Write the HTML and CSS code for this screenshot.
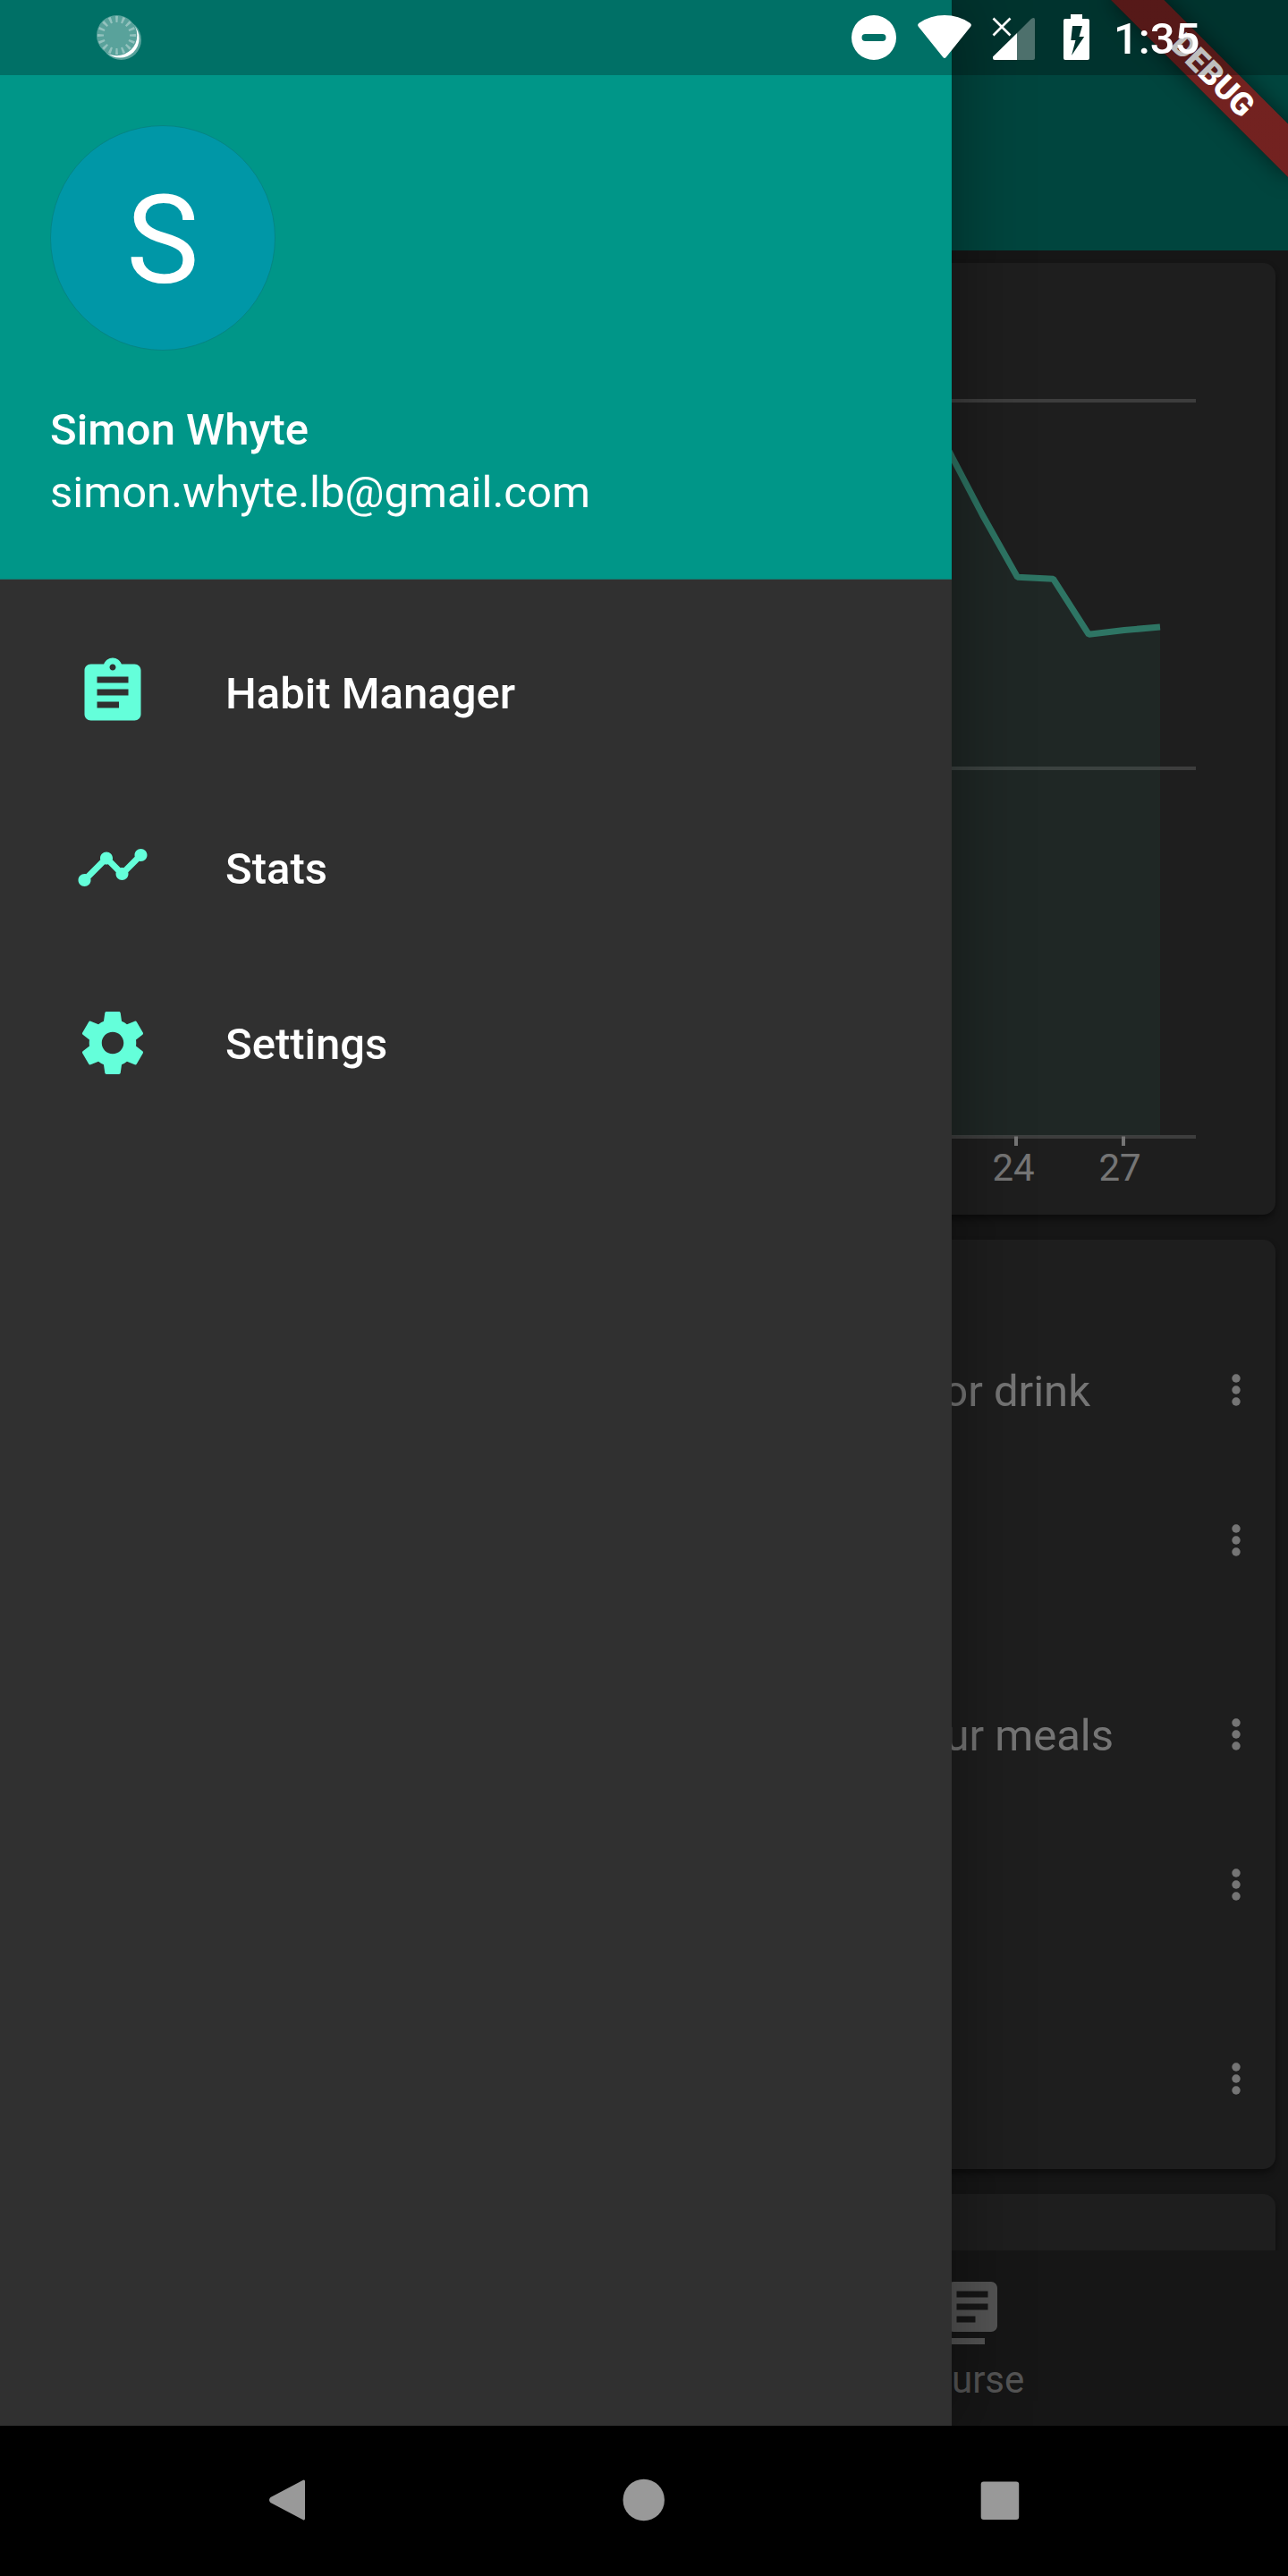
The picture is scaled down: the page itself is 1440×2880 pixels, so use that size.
FILE: index.html
```html
<!DOCTYPE html>
<html lang="en">
<head>
<meta charset="utf-8">
<title>Habits</title>
<link rel="stylesheet" href="styles.css">
</head>
<body>
<div class="screen">
  <div class="app">
    <header class="app-bar"></header>
    <main class="content">
      <section class="card chart-card">
        <svg class="chart" viewBox="14 294 1412 1064">
          <g class="grid">
            <path d="M100 448H1337M100 859H1337M100 1271H1337"/>
          </g>
          <path class="area" d="M1020 427L1064 510L1098 575L1137 645L1178 647L1217.5 709.5L1257 705L1297 701V1269.5H1020Z"/>
          <path class="line" d="M1020 427L1064 510L1098 575L1137.5 645.2L1177.5 647.2L1217.3 709.3L1257 704.5L1297 701"/>
          <path class="tick" d="M1136 1270.5V1281M1256 1270.5V1281"/>
          <text class="label" x="1133" y="1320">24</text>
          <text class="label" x="1252" y="1320">27</text>
        </svg>
      </section>
      <section class="card habits">
        <div class="group">
          <div class="habit"><span class="habit-name name-drink">or drink</span><svg class="more" viewBox="0 0 10 36"><circle cx="5" cy="5" r="4.7"/><circle cx="5" cy="18" r="4.7"/><circle cx="5" cy="31" r="4.7"/></svg></div>
          <div class="habit"><svg class="more" viewBox="0 0 10 36"><circle cx="5" cy="5" r="4.7"/><circle cx="5" cy="18" r="4.7"/><circle cx="5" cy="31" r="4.7"/></svg></div>
        </div>
        <div class="group">
          <div class="habit"><span class="habit-name name-meals">ur meals</span><svg class="more" viewBox="0 0 10 36"><circle cx="5" cy="5" r="4.7"/><circle cx="5" cy="18" r="4.7"/><circle cx="5" cy="31" r="4.7"/></svg></div>
          <div class="habit"><svg class="more" viewBox="0 0 10 36"><circle cx="5" cy="5" r="4.7"/><circle cx="5" cy="18" r="4.7"/><circle cx="5" cy="31" r="4.7"/></svg></div>
        </div>
        <div class="group">
          <div class="habit"><svg class="more" viewBox="0 0 10 36"><circle cx="5" cy="5" r="4.7"/><circle cx="5" cy="18" r="4.7"/><circle cx="5" cy="31" r="4.7"/></svg></div>
        </div>
      </section>
      <section class="card next-card"></section>
    </main>
    <nav class="tabs">
      <div class="tab"></div>
      <div class="tab">
        <svg class="icon" viewBox="0 0 24 24"><path d="M4 6H2v14c0 1.1.9 2 2 2h14v-2H4V6zm16-4H8c-1.1 0-2 .9-2 2v12c0 1.1.9 2 2 2h12c1.1 0 2-.9 2-2V4c0-1.1-.9-2-2-2zm-1 9H9V9h10v2zm-4 4H9v-2h6v2zm4-8H9V5h10v2z"/></svg>
        <span class="tab-label">Course</span>
      </div>
    </nav>
    <div class="scrim"></div>
    <aside class="drawer">
      <div class="account">
        <div class="avatar">S</div>
        <div class="account-name">Simon Whyte</div>
        <div class="account-email">simon.whyte.lb@gmail.com</div>
      </div>
      <ul class="menu">
        <li class="menu-item">
          <svg class="icon" viewBox="0 0 24 24"><path d="M19 3h-4.18C14.4 1.84 13.3 1 12 1c-1.3 0-2.4.84-2.82 2H5c-1.1 0-2 .9-2 2v14c0 1.1.9 2 2 2h14c1.1 0 2-.9 2-2V5c0-1.1-.9-2-2-2zm-7 0c.55 0 1 .45 1 1s-.45 1-1 1-1-.45-1-1 .45-1 1-1zm2 14H7v-2h7v2zm3-4H7v-2h10v2zm0-4H7V7h10v2z"/></svg>
          <span class="menu-label">Habit Manager</span>
        </li>
        <li class="menu-item">
          <svg class="icon" viewBox="0 0 24 24"><path d="M23 8c0 1.1-.9 2-2 2-.18 0-.35-.02-.51-.07l-3.56 3.55c.05.16.07.34.07.52 0 1.1-.9 2-2 2s-2-.9-2-2c0-.18.02-.36.07-.52l-2.55-2.55c-.16.05-.34.07-.52.07s-.36-.02-.52-.07l-4.55 4.56c.05.16.07.33.07.51 0 1.1-.9 2-2 2s-2-.9-2-2 .9-2 2-2c.18 0 .35.02.51.07l4.56-4.55C8.02 9.36 8 9.18 8 9c0-1.1.9-2 2-2s2 .9 2 2c0 .18-.02.36-.07.52l2.55 2.55c.16-.05.34-.07.52-.07s.36.02.52.07l3.55-3.56C19.02 8.35 19 8.18 19 8c0-1.1.9-2 2-2s2 .9 2 2z"/></svg>
          <span class="menu-label">Stats</span>
        </li>
        <li class="menu-item">
          <svg class="icon" viewBox="0 0 24 24"><path d="M19.43 12.98c.04-.32.07-.64.07-.98s-.03-.66-.07-.98l2.11-1.65c.19-.15.24-.42.12-.64l-2-3.46c-.12-.22-.39-.3-.61-.22l-2.49 1c-.52-.4-1.08-.73-1.69-.98l-.38-2.65C14.46 2.18 14.25 2 14 2h-4c-.25 0-.46.18-.49.42l-.38 2.65c-.61.25-1.17.59-1.69.98l-2.49-1c-.23-.09-.49 0-.61.22l-2 3.46c-.13.22-.07.49.12.64l2.11 1.65c-.04.32-.07.65-.07.98s.03.66.07.98l-2.11 1.65c-.19.15-.24.42-.12.64l2 3.46c.12.22.39.3.61.22l2.49-1c.52.4 1.08.73 1.69.98l.38 2.65c.03.24.24.42.49.42h4c.25 0 .46-.18.49-.42l.38-2.65c.61-.25 1.17-.59 1.69-.98l2.49 1c.23.09.49 0 .61-.22l2-3.46c.12-.22.07-.49-.12-.64l-2.11-1.65zM12 15.5c-1.93 0-3.5-1.57-3.5-3.5s1.57-3.5 3.5-3.5 3.5 1.57 3.5 3.5-1.57 3.5-3.5 3.5z"/></svg>
          <span class="menu-label">Settings</span>
        </li>
      </ul>
    </aside>
    <div class="debug-banner">DEBUG</div>
    <div class="status-bar">
      <svg class="sync" viewBox="107 16 52 52">
        <defs><mask id="crescent"><rect x="100" y="10" width="70" height="70" fill="#fff"/><circle cx="130.5" cy="39.5" r="22.8" fill="#000"/></mask></defs>
        <g opacity=".35" fill="#fff"><circle cx="130.5" cy="39.5" r="22.5"/><circle cx="135.5" cy="44.5" r="22.5"/></g>
        <circle cx="134" cy="43" r="21.6" fill="#fff" mask="url(#crescent)"/>
        <circle cx="130.5" cy="39.5" r="18" pathLength="160" class="sync-ticks"/>
      </svg>
      <div class="status-icons">
        <svg width="52" height="84" viewBox="951 0 52 84"><path fill="#fff" fill-rule="evenodd" d="M977 17a25 25 0 1 0 0 50a25 25 0 1 0 0-50ZM967.5 38h19a4 4 0 0 1 0 8h-19a4 4 0 0 1 0-8Z"/></svg>
        <svg width="62" height="84" viewBox="1025 0 62 84"><path fill="#fff" d="M1026.800 29.800Q1025.200 27.500 1027.500 25.800Q1040 17 1056 17T1084.500 25.800Q1086.800 27.500 1085.200 29.800L1058.500 63Q1056 67 1053.500 63Z"/></svg>
        <svg width="50" height="84" viewBox="1109 0 50 84"><path fill="#fff" d="M1137 37V67H1112Q1110 67 1110 65V63.500Z"/><path fill="#fff" opacity=".3" d="M1137 37L1153 21Q1157 18.500 1157 22V65Q1157 67 1155 67H1137Z"/><path stroke="#fff" stroke-width="2.600" d="M1110.500 20.500L1129.500 39.500M1129.500 20.500L1110.500 39.500"/></svg>
        <svg width="31" height="84" viewBox="1188 0 31 84"><path fill="#fff" fill-rule="evenodd" d="M1197 16H1210V21H1216Q1218 21 1218 23V65Q1218 67 1216 67H1191Q1189 67 1189 65V23Q1189 21 1191 21H1197ZM1199 29L1197.300 45H1202.500L1198 62L1212.200 41H1206.500L1210 29Z"/></svg>
        <span class="clock">1:35</span>
      </div>
    </div>
  </div>
  <div class="system-nav">
    <svg viewBox="0 0 48 48"><path d="M40.500 2Q43 .500 43 3.500V44.500Q43 47.500 40.500 46L4.500 27Q1.500 24 4.500 21Z"/></svg>
    <svg viewBox="0 0 48 48"><circle cx="23.700" cy="24" r="23.200"/></svg>
    <svg viewBox="0 0 48 48"><rect x="2.700" y="3.500" width="42.500" height="42.500" rx="3"/></svg>
  </div>
</div>
</body>
</html>
```
FILE: styles.css
```css
* { box-sizing: border-box; }

body {
  margin: 0;
  background: #000;
  color: #fff;
  font-family: Roboto, "Noto Sans", sans-serif;
}

svg { display: block; flex: none; }

.screen {
  display: flex;
  flex-direction: column;
  width: 1440px;
  height: 2880px;
}

.app {
  position: relative;
  display: flex;
  flex-direction: column;
  height: 2712px;
  overflow: hidden;
  background: #303030;
}

.app-bar {
  flex: none;
  height: 280px;
  background: #009688;
}

.content {
  display: flex;
  flex: 1;
  flex-direction: column;
  gap: 28px;
  min-height: 0;
  padding: 14px 14px 0;
  overflow: hidden;
}

.card {
  flex: none;
  border-radius: 14px;
  background: #424242;
  box-shadow: 0 7px 10px -3px rgba(0, 0, 0, .35), 0 3px 7px rgba(0, 0, 0, .22);
}

.chart-card { height: 1064px; }
.chart { width: 1412px; height: 1064px; }
.grid path { stroke: #858585; stroke-width: 3.8; }
.area { fill: #64ffda; opacity: .1; }
.line { fill: none; stroke: #64ffda; stroke-width: 7; stroke-linejoin: bevel; }
.tick { stroke: #fff; stroke-width: 4; }
.label { fill: #fff; font-size: 42px; text-anchor: middle; }

.habits {
  display: flex;
  flex-direction: column;
  gap: 49px;
  height: 1039px;
  padding-top: 84px;
}

.habit {
  display: flex;
  align-items: center;
  justify-content: flex-end;
  height: 168px;
  padding-right: 39px;
}

.habit-name { padding-top: 3px; font-size: 49px; line-height: 56px; }
.name-drink { margin-right: 158px; }
.name-meals { margin-right: 132px; }
.more { width: 10px; height: 36px; fill: #fff; }
.next-card { height: 200px; }

.tabs {
  display: flex;
  flex: none;
  height: 196px;
  background: #303030;
  color: #b8b8b8;
}

.tab {
  display: flex;
  flex: 1;
  flex-direction: column;
  align-items: center;
  padding-top: 28px;
}

.tab-label { margin-top: 8px; padding-right: 2px; font-size: 42px; line-height: 49px; }
.icon { width: 84px; height: 84px; fill: currentColor; }

.scrim {
  position: absolute;
  inset: 0;
  background: rgba(0, 0, 0, .54);
}

.drawer {
  position: absolute;
  top: 0;
  bottom: 0;
  left: 0;
  width: 1064px;
  background: #303030;
  box-shadow: 0 0 80px rgba(0, 0, 0, .4);
}

.account {
  height: 648px;
  padding: 140px 56px 0;
  border-bottom: 1px solid #16786e;
  background: #009688;
}

.avatar {
  width: 252px;
  height: 252px;
  border: 1px solid #058684;
  border-radius: 50%;
  background: #0097a7;
  font-size: 137px;
  line-height: 257px;
  text-align: center;
}

.account-name { margin-top: 60px; font-size: 49px; font-weight: 500; line-height: 58px; }
.account-email { margin-top: 12px; font-size: 49px; line-height: 58px; }

.menu { margin: 0; padding: 28px 0; list-style: none; }

.menu-item {
  display: flex;
  align-items: center;
  gap: 84px;
  height: 196px;
  padding-left: 84px;
  font-size: 49px;
  font-weight: 500;
}

.menu-label { padding-top: 2px; }
.menu-item .icon { color: #64ffda; }

/* Ribbon rotated about the top right corner of the app. */
.debug-banner {
  position: absolute;
  top: 98px;
  left: 1300px;
  width: 280px;
  height: 42px;
  transform: rotate(45deg);
  transform-origin: 140px -98px;
  background: linear-gradient(rgba(183, 28, 28, .627), rgba(183, 28, 28, .627)), rgba(0, 0, 0, .36);
  box-shadow: 0 0 24px rgba(0, 0, 0, .5);
  font-size: 35.7px;
  font-weight: 900;
  line-height: 42px;
  text-align: center;
}

.status-bar {
  position: absolute;
  top: 0;
  right: 0;
  left: 0;
  display: flex;
  justify-content: space-between;
  height: 84px;
  padding: 0 98px 0 107px;
  background: rgba(0, 0, 0, .25);
}

.sync { width: 52px; height: 52px; margin-top: 16px; }

.sync-ticks {
  fill: none;
  stroke: rgba(255, 255, 255, .35);
  stroke-width: 7;
  stroke-dasharray: 3.6 6.4;
  stroke-dashoffset: 1.8;
}

.status-icons { display: flex; }
.status-icons svg + svg { margin-left: 22px; }
.status-icons svg:nth-of-type(4) { margin-left: 29px; }

.clock {
  width: 97px;
  margin-left: 26px;
  font-size: 49px;
  font-weight: 500;
  line-height: 88px;
  white-space: nowrap;
}

.system-nav {
  display: flex;
  align-items: center;
  justify-content: space-between;
  height: 168px;
  padding: 0 298px 2px;
}

.system-nav svg { width: 48px; height: 48px; fill: #999; }
```
